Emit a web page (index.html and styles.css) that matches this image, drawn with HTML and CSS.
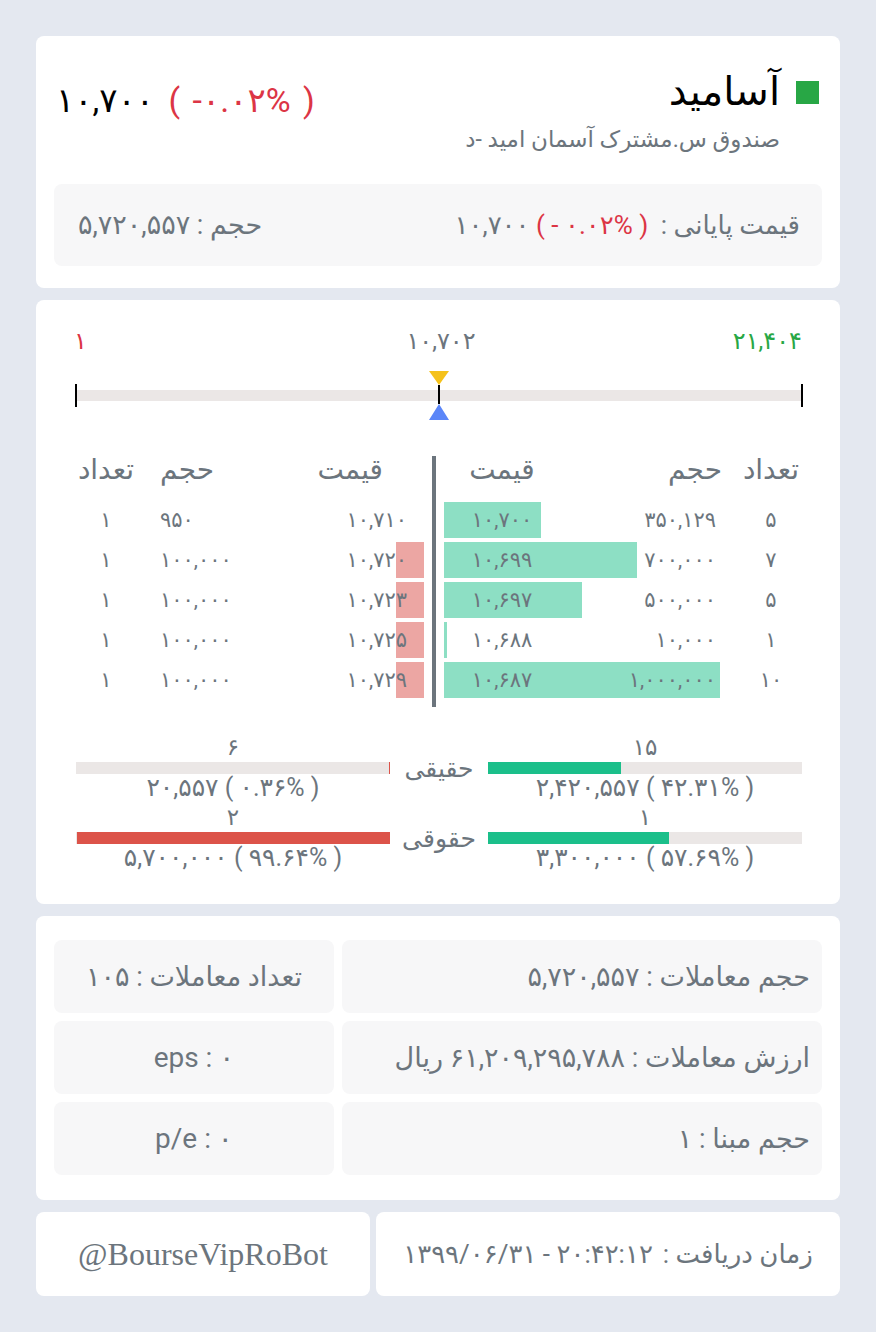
FILE: index.html
```html
<!DOCTYPE html>
<html lang="fa" dir="rtl">
<head>
<meta charset="utf-8">
<title>آسامید</title>
<link rel="stylesheet" href="styles.css">
</head>
<body>
<main class="page">

  <section class="card head-card">
    <div class="head">
      <div class="title-block">
        <div class="title-row"><span class="sq"></span><span class="title">آسامید</span></div>
        <div class="subtitle">صندوق س.مشترک آسمان امید -د</div>
      </div>
      <div class="price" dir="ltr">۱۰,۷۰۰ <span class="neg">( -۰.۰۲% )</span></div>
    </div>
    <div class="closing">
      <div class="closing-price"><span>قیمت پایانی :</span> <bdi class="num" dir="ltr">۱۰,۷۰۰ <span class="neg">( - ۰.۰۲% )</span></bdi></div>
      <div class="closing-vol">حجم : ۵,۷۲۰,۵۵۷</div>
    </div>
  </section>

  <section class="card market-card">
    <div class="range-labels">
      <span class="hi">۲۱,۴۰۴</span>
      <span class="mid">۱۰,۷۰۲</span>
      <span class="lo">۱</span>
    </div>
    <div class="slider" dir="ltr">
      <div class="track"></div>
      <span class="tick tick-l"></span>
      <span class="tick tick-r"></span>
      <div class="marker" style="left:50%">
        <span class="tri-down"></span>
        <span class="stem"></span>
        <span class="tri-up"></span>
      </div>
    </div>

    <div class="book">
      <div class="side buy">
        <div class="bhead"><span class="c-count">تعداد</span><span class="c-vol">حجم</span><span class="c-price">قیمت</span></div>
        <div class="brow" style="--w:97px"><span class="c-count">۵</span><span class="c-vol">۳۵۰,۱۲۹</span><span class="c-price">۱۰,۷۰۰</span></div>
        <div class="brow" style="--w:193px"><span class="c-count">۷</span><span class="c-vol">۷۰۰,۰۰۰</span><span class="c-price">۱۰,۶۹۹</span></div>
        <div class="brow" style="--w:138px"><span class="c-count">۵</span><span class="c-vol">۵۰۰,۰۰۰</span><span class="c-price">۱۰,۶۹۷</span></div>
        <div class="brow" style="--w:3px"><span class="c-count">۱</span><span class="c-vol">۱۰,۰۰۰</span><span class="c-price">۱۰,۶۸۸</span></div>
        <div class="brow" style="--w:276px"><span class="c-count">۱۰</span><span class="c-vol">۱,۰۰۰,۰۰۰</span><span class="c-price">۱۰,۶۸۷</span></div>
      </div>
      <div class="divider"></div>
      <div class="side sell" dir="ltr">
        <div class="shead"><span class="c-count">تعداد</span><span class="c-vol">حجم</span><span class="c-price">قیمت</span></div>
        <div class="srow" style="--w:0px"><span class="c-count">۱</span><span class="c-vol">۹۵۰</span><span class="c-price">۱۰,۷۱۰</span></div>
        <div class="srow" style="--w:28px"><span class="c-count">۱</span><span class="c-vol">۱۰۰,۰۰۰</span><span class="c-price">۱۰,۷۲۰</span></div>
        <div class="srow" style="--w:28px"><span class="c-count">۱</span><span class="c-vol">۱۰۰,۰۰۰</span><span class="c-price">۱۰,۷۲۳</span></div>
        <div class="srow" style="--w:28px"><span class="c-count">۱</span><span class="c-vol">۱۰۰,۰۰۰</span><span class="c-price">۱۰,۷۲۵</span></div>
        <div class="srow" style="--w:28px"><span class="c-count">۱</span><span class="c-vol">۱۰۰,۰۰۰</span><span class="c-price">۱۰,۷۲۹</span></div>
      </div>
    </div>

    <div class="totals">
      <div class="trow">
        <div class="tside tbuy">
          <div class="tcount">۱۵</div>
          <div class="tbar"><div class="tfill green" style="width:42.31%"></div></div>
          <div class="tval" dir="ltr">۲,۴۲۰,۵۵۷ ( ۴۲.۳۱% )</div>
        </div>
        <div class="tlabel">حقیقی</div>
        <div class="tside tsell">
          <div class="tcount">۶</div>
          <div class="tbar"><div class="tfill red" style="width:0.36%"></div></div>
          <div class="tval" dir="ltr">۲۰,۵۵۷ ( ۰.۳۶% )</div>
        </div>
      </div>
      <div class="trow">
        <div class="tside tbuy">
          <div class="tcount">۱</div>
          <div class="tbar"><div class="tfill green" style="width:57.69%"></div></div>
          <div class="tval" dir="ltr">۳,۳۰۰,۰۰۰ ( ۵۷.۶۹% )</div>
        </div>
        <div class="tlabel">حقوقی</div>
        <div class="tside tsell">
          <div class="tcount">۲</div>
          <div class="tbar"><div class="tfill red" style="width:99.64%"></div></div>
          <div class="tval" dir="ltr">۵,۷۰۰,۰۰۰ ( ۹۹.۶۴% )</div>
        </div>
      </div>
    </div>
  </section>

  <section class="card stats-card">
    <div class="stats">
      <div class="cell cell-r">حجم معاملات : ۵,۷۲۰,۵۵۷</div>
      <div class="cell cell-l">تعداد معاملات : ۱۰۵</div>
      <div class="cell cell-r">ارزش معاملات : ۶۱,۲۰۹,۲۹۵,۷۸۸ ریال</div>
      <div class="cell cell-l latin" dir="ltr">eps : ۰</div>
      <div class="cell cell-r">حجم مبنا : ۱</div>
      <div class="cell cell-l latin" dir="ltr">p/e : ۰</div>
    </div>
  </section>

  <footer class="footer">
    <div class="fbox ftime"><span>زمان دریافت :</span><bdi class="num" dir="ltr">۱۳۹۹/۰۶/۳۱ - ۲۰:۴۲:۱۲</bdi></div>
    <div class="fbox fbot" dir="ltr">@BourseVipRoBot</div>
  </footer>

</main>
</body>
</html>
```

FILE: styles.css
```css
* { box-sizing: border-box; }

html, body {
  margin: 0;
  padding: 0;
  background: #e4e8f0;
}

body {
  font-family: Roboto, "DejaVu Sans", sans-serif;
  color: #6c757d;
  direction: rtl;
}

.page {
  padding: 36px;
  display: flex;
  flex-direction: column;
  gap: 12px;
}

.card {
  background: #ffffff;
  border-radius: 8px;
}

/* ---------- head card ---------- */
.head-card {
  padding: 0 18px 22px;
}

.head {
  height: 148px;
  padding-top: 32px;
  display: flex;
  justify-content: space-between;
  align-items: flex-start;
}

.title-row {
  display: flex;
  align-items: center;
  height: 48px;
  gap: 16px;
  padding-right: 3px;
}

.sq {
  width: 23px;
  height: 23px;
  background: #28a745;
  flex: 0 0 auto;
}

.title {
  font-size: 40px;
  color: #000;
  line-height: 48px;
}

.subtitle {
  margin-top: 12px;
  padding-right: 42px;
  font-size: 23px;
  line-height: 24px;
}

.price {
  margin-top: 8px;
  margin-left: 2px;
  font-size: 34px;
  line-height: 48px;
  color: #000;
  direction: ltr;
}
.price .neg { margin-left: 6px; word-spacing: 4px; }

.neg { color: #dc3545; }

.closing {
  height: 82px;
  background: #f7f7f8;
  border-radius: 8px;
  padding: 0 22px 0 24px;
  display: flex;
  align-items: center;
  justify-content: space-between;
  font-size: 26px;
}
.closing .num { margin-right: 6px; }
.closing-vol { font-size: 27px; }

/* ---------- market card ---------- */
.market-card {
  padding: 26px 38px 32px 40px;
}

.range-labels {
  display: grid;
  grid-template-columns: 1fr auto 1fr;
  font-size: 24px;
  line-height: 30px;
}
.range-labels .hi { color: #28a745; justify-self: start; }
.range-labels .mid { justify-self: center; margin-left: 4px; }
.range-labels .lo { color: #dc3545; justify-self: end; margin-left: -2px; }

.slider {
  position: relative;
  margin-top: 15px;
  padding-top: 19px;
  height: 50px;
}

.track {
  height: 11px;
  background: #ebe7e6;
}

.tick {
  position: absolute;
  top: 13px;
  width: 2px;
  height: 23px;
  background: #000;
}
.tick-l { left: -1px; }
.tick-r { right: -1px; }

.marker {
  position: absolute;
  top: 0;
  transform: translateX(-50%);
  display: flex;
  flex-direction: column;
  align-items: center;
}

.tri-down {
  width: 0;
  height: 0;
  border-left: 10px solid transparent;
  border-right: 10px solid transparent;
  border-top: 14px solid #f5c21b;
}

.stem {
  width: 2px;
  height: 19px;
  background: #000;
}

.tri-up {
  width: 0;
  height: 0;
  border-left: 10px solid transparent;
  border-right: 10px solid transparent;
  border-bottom: 16px solid #5b86f8;
}

/* order book */
.book {
  margin-top: 35px;
  display: flex;
  align-items: stretch;
  padding-bottom: 5px;
}

.side { display: flex; flex-direction: column; }
.buy { width: 358px; }
.sell { width: 348px; direction: ltr; }

.divider {
  width: 4px;
  margin: 0 8px -5px;
  background: #6c757d;
}

.bhead, .brow {
  display: grid;
  grid-template-columns: 62px 180px 116px;
}
.shead, .srow {
  display: grid;
  grid-template-columns: 60px 140px 148px;
}

.bhead, .shead {
  height: 46px;
  font-size: 28px;
  line-height: 28px;
}

.brow, .srow {
  height: 36px;
  margin-bottom: 4px;
  font-size: 21px;
  line-height: 36px;
}

.brow {
  background: linear-gradient(to right, #8ddfc4 var(--w), transparent var(--w));
}
.srow {
  background: linear-gradient(to left, #eca6a3 var(--w), transparent var(--w));
}

.c-count { text-align: center; }

.bhead .c-vol { text-align: right; padding-right: 18px; }
.bhead .c-price { text-align: center; }
.brow .c-vol { text-align: right; padding-right: 24px; }
.brow .c-price { text-align: center; }

.shead .c-vol { text-align: left; padding-left: 24px; }
.shead .c-price { text-align: right; padding-right: 41px; }
.srow .c-vol { text-align: left; padding-left: 24px; }
.srow .c-price { text-align: right; padding-right: 17px; }

/* totals */
.totals {
  margin-top: 29px;
  display: flex;
  flex-direction: column;
  gap: 4px;
}

.trow {
  display: flex;
  align-items: center;
}

.tside {
  width: 314px;
  display: flex;
  flex-direction: column;
  align-items: stretch;
  text-align: center;
}

.tlabel {
  width: 98px;
  text-align: center;
  font-size: 25px;
  line-height: 30px;
}

.tcount {
  font-size: 23px;
  line-height: 24px;
}

.tbar {
  margin-top: 2px;
  height: 12px;
  background: #ebe7e6;
}
.tbuy .tbar { direction: ltr; }
.tsell .tbar { direction: rtl; }

.tfill { height: 100%; }
.tfill.green { background: #1bbf8a; }
.tfill.red { background: #dc5349; }

.tval {
  font-size: 25px;
  line-height: 28px;
  direction: ltr;
}

/* ---------- stats card ---------- */
.stats-card {
  padding: 24px 18px 25px;
}

.stats {
  display: grid;
  grid-template-columns: 480px 280px;
  grid-auto-rows: 73px;
  gap: 8px;
}

.cell {
  background: #f7f7f8;
  border-radius: 8px;
  display: flex;
  align-items: center;
  font-size: 27px;
}
.cell-r { justify-content: flex-start; padding-right: 12px; }
.cell-l { justify-content: center; }
.cell.latin { font-size: 28px; }

/* ---------- footer ---------- */
.footer {
  display: flex;
  gap: 6px;
  height: 84px;
}

.fbox {
  background: #ffffff;
  border-radius: 8px;
  display: flex;
  align-items: center;
  justify-content: center;
}

.ftime {
  flex: 0 0 464px;
  font-size: 26px;
}
.ftime .num { margin-right: 10px; }

.fbot {
  flex: 1 1 auto;
  font-family: "Liberation Serif", serif;
  font-size: 32px;
}
```
